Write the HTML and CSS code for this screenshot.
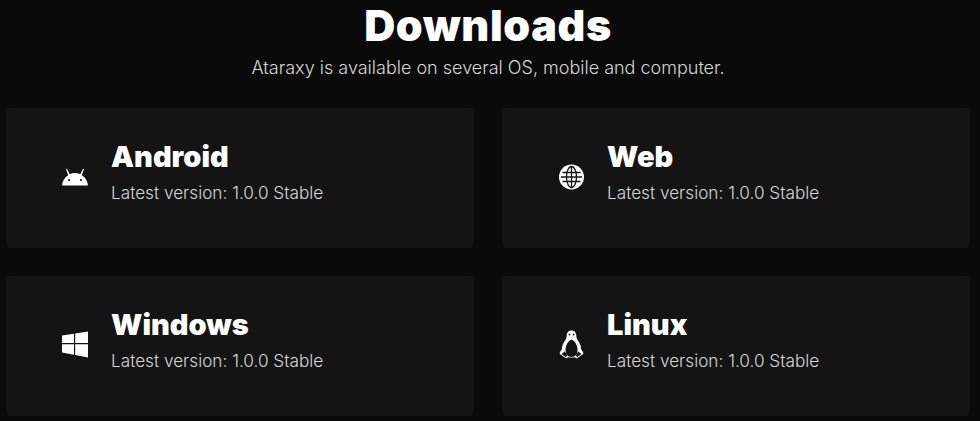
FILE: index.html
```html
<!DOCTYPE html>
<html lang="en">
<head>
    <meta charset="UTF-8">
    <meta name="viewport" content="width=device-width, initial-scale=1.0">
    <title>Downloads</title>
    <link rel="stylesheet" href="styles.css">
</head>
<body>
    <div class="page">
        <h1 class="title">Downloads</h1>
        <p class="subtitle">Ataraxy is available on several OS, mobile and computer.</p>
        <div class="grid">
            <div class="card">
                <svg class="icon" viewBox="0 0 30 30">
                    <path d="M2 23.500C2.400 18.800 4.800 15.300 8.200 13.200L6.200 7.400a.5.5 0 0 1 .9-.4L9.700 12.200C11.300 11.500 13.100 11 15 11s3.700.5 5.300 1.200L22.900 7a.5.5 0 0 1 .9.400L21.800 13.200c3.400 2.100 5.800 5.600 6.200 10.300z" fill="#fff"/>
                    <circle cx="9" cy="18" r="1.100" fill="#141414"/>
                    <circle cx="21" cy="18" r="1.100" fill="#141414"/>
                </svg>
                <div class="info">
                    <h2 class="name">Android</h2>
                    <p class="version">Latest version: 1.0.0 Stable</p>
                </div>
            </div>
            <div class="card">
                <svg class="icon" viewBox="0 0 30 30">
                    <circle cx="15.500" cy="15" r="12.500" fill="#fff"/>
                    <g fill="none" stroke="#141414" stroke-width="1.300">
                        <ellipse cx="15.500" cy="15" rx="5" ry="10.500"/>
                        <path d="M15.500 4.500v21M6.500 10.500h18M6.500 19.500h18M5 15h21"/>
                    </g>
                </svg>
                <div class="info">
                    <h2 class="name">Web</h2>
                    <p class="version">Latest version: 1.0.0 Stable</p>
                </div>
            </div>
            <div class="card">
                <svg class="icon" viewBox="0 0 30 30">
                    <path d="M2 5.500L14 3.650V13H2zM15.200 3.500L28 1.500V13H15.200zM2 14.200H14V24.800L2 22.500zM15.200 14.200H28V27.500L15.200 25z" fill="#fff"/>
                </svg>
                <div class="info">
                    <h2 class="name">Windows</h2>
                    <p class="version">Latest version: 1.0.0 Stable</p>
                </div>
            </div>
            <div class="card">
                <svg class="icon" viewBox="0 -2 30 30">
                    <path d="M15.500-1.500c3 0 4.800 2.300 4.800 5 0 2.800.8 4 2.300 6 1.500 2.200 2.600 5 2.500 8 .9.700 1.700 2 2.100 3.300.3 1-.1 1.500-1 2l-4.400 3c-1 .7-2.100.5-2.800-.6-1.100.3-2.200.4-3.500.4s-2.400-.1-3.500-.4c-.7 1.100-1.800 1.300-2.800.6l-4.400-3c-.9-.5-1.300-1-1-2 .4-1.300 1.200-2.600 2.100-3.300-.1-3 1-5.800 2.500-8 1.500-2 2.300-3.200 2.300-6 0-2.700 1.800-5 4.800-5z" fill="#fff"/>
                    <path d="M15.500 7.500c-3.400 1.300-6 5.800-6 10.500 0 3.800 2 7 6 7s6-3.200 6-7c0-4.700-2.600-9.200-6-10.500z" fill="#141414"/>
                    <path d="M8.800 19.500l-3.300 2.600 4.600 3.200 1-2.300zM22.200 19.500l3.300 2.600-4.600 3.200-1-2.300z" fill="#141414"/>
                    <circle cx="13.500" cy="2.500" r=".9" fill="#141414"/>
                    <circle cx="17.500" cy="2.500" r=".9" fill="#141414"/>
                </svg>
                <div class="info">
                    <h2 class="name">Linux</h2>
                    <p class="version">Latest version: 1.0.0 Stable</p>
                </div>
            </div>
        </div>
    </div>
</body>
</html>
```
FILE: styles.css
```css
body {
    font-family: Inter, "Liberation Sans", sans-serif;
    margin: 0;
    padding: 0;
    background-color: #0a0a0a;
    color: #fff;
}
.page {
    padding: 0 10px 0 6px;
}
.title {
    margin: 0;
    font-size: 43px;
    font-weight: 900;
    letter-spacing: 0.65px;
    line-height: 51px;
    text-align: center;
}
.subtitle {
    margin: 5px 0 0;
    font-size: 18px;
    font-weight: 300;
    line-height: 24px;
    text-align: center;
    color: #d6d6d6;
}
.grid {
    display: grid;
    grid-template-columns: 1fr 1fr;
    gap: 28px;
    margin-top: 28px;
    padding-bottom: 5px;
}
.card {
    display: flex;
    align-items: center;
    height: 140px;
    padding: 0 0 0 54px;
    box-sizing: border-box;
    background-color: #141414;
    border-radius: 4px;
}
.icon {
    width: 30px;
    height: 30px;
    flex: none;
    margin: -3px 21px 0 0;
}
.info {
    margin-top: -13px;
}
.name {
    margin: 0;
    font-size: 29px;
    font-weight: 900;
    line-height: 38px;
}
.version {
    margin: 5px 0 0;
    font-size: 17.2px;
    font-weight: 300;
    line-height: 24px;
    color: #d6d6d6;
}
```
